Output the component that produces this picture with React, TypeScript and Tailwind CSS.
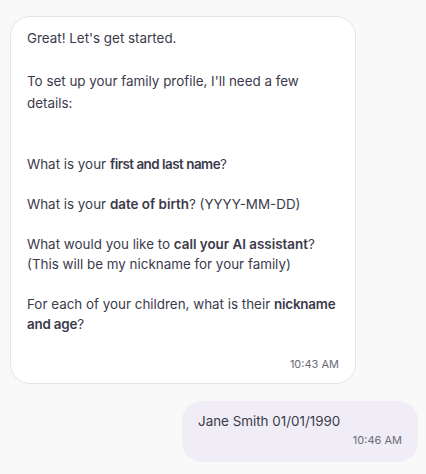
import React from "react";

export default function App() {
  return (
    <div
      className="w-[426px] h-[474px] bg-[#f9f9f9] overflow-hidden pt-4 px-[10px] text-[#3b3a4b] text-[13.4px]"
      style={{ fontFamily: "Inter, 'Noto Sans', sans-serif" }}
    >
      <div className="w-[346px] bg-white border border-[#e4e4e7] rounded-[20px] pt-[11px] pb-[12px] px-4">
        <p className="leading-[20px]">Great! Let's get started.</p>
        <p className="leading-[22px] mt-[22px]">
          To set up your family profile, I'll need a few
          <br />
          details:
        </p>
        <div className="leading-[20px] mt-[40px]">
          <p>
            What is your <b className="font-semibold tracking-[-0.5px]">first and last name</b>?
          </p>
          <p className="mt-5">
            What is your <b className="font-semibold">date of birth</b>? (YYYY-MM-DD)
          </p>
          <p className="mt-5">
            What would you like to <b className="font-semibold">call your AI assistant</b>?
            <br />
            (This will be my nickname for your family)
          </p>
          <p className="mt-5">
            For each of your children, what is their{" "}
            <b className="font-semibold tracking-[-0.2px]">
              nickname
              <br />
              and age
            </b>
            ?
          </p>
        </div>
        <div className="mt-[23px] text-right text-[11px] leading-[14px] text-[#6b6b78]">
          10:43 AM
        </div>
      </div>
      <div className="flex justify-end mt-[17px]">
        <div className="w-[236px] mr-[-2px] bg-[#f0edf6] rounded-[20px] pt-[10px] pb-[15px] px-4">
          <p className="leading-[20px]">Jane Smith 01/01/1990</p>
          <div className="mt-[2px] text-right text-[11px] leading-[14px] text-[#6b6b78]">
            10:46 AM
          </div>
        </div>
      </div>
    </div>
  );
}
